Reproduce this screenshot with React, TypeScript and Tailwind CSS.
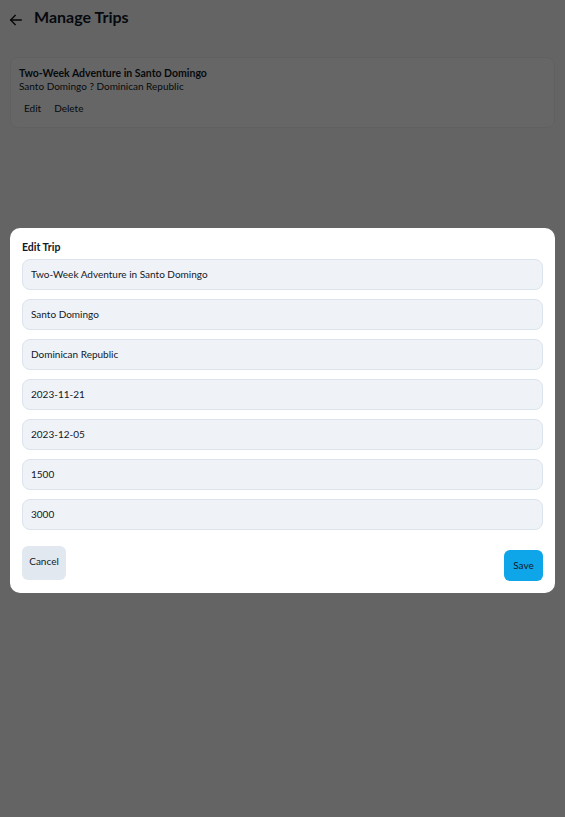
import React from "react";

const font = { fontFamily: 'Lato, "Noto Sans", sans-serif' };

export default function App() {
  const values = [
    "Two-Week Adventure in Santo Domingo",
    "Santo Domingo",
    "Dominican Republic",
    "2023-11-21",
    "2023-12-05",
    "1500",
    "3000",
  ];
  return (
    <div className="relative min-h-[817px] bg-[#fafbfc] text-[#111827]" style={font}>
      <div className="flex items-center gap-[10px] px-[8px] pt-[6px]">
        <svg width="16" height="16" viewBox="0 0 24 24" fill="none" stroke="#111" strokeWidth="2" strokeLinecap="round" strokeLinejoin="round" className="mt-[6px]">
          <path d="M20 12H4" />
          <path d="M11 19l-7-7 7-7" />
        </svg>
        <h1 className="text-[16px] font-bold leading-[22px]">Manage Trips</h1>
      </div>
      <div className="mx-[10px] mt-[29px] h-[71px] rounded-[8px] border border-[#f0f0f0] bg-white px-[8px] pt-[9px]">
        <div className="text-[10.5px] font-bold leading-[13px]">Two-Week Adventure in Santo Domingo</div>
        <div className="text-[10px] leading-[13px]">Santo Domingo ? Dominican Republic</div>
        <div className="mt-[9px] flex gap-[2px] text-[10px] leading-[13px]">
          <button className="px-[5px]">Edit</button>
          <button className="px-[6px]">Delete</button>
        </div>
      </div>

      <div className="fixed inset-0 flex items-center justify-center bg-black/60 px-[10px]">
        <div className="mt-[4px] w-full rounded-[10px] bg-white px-[12px] pt-[12px] pb-[12px]">
          <div className="text-[10.5px] font-bold leading-[14px]">Edit Trip</div>
          <div className="mt-[5px] flex flex-col gap-[9px]">
            {values.map((v) => (
              <div
                key={v}
                className="flex h-[31px] items-center rounded-[8px] border border-[#dbe3ec] bg-[#eff2f7] px-[8px] text-[10px]"
              >
                {v}
              </div>
            ))}
          </div>
          <div className="mt-[16px] flex items-end justify-between">
            <button className="mb-[1px] h-[34px] w-[44px] rounded-[6px] bg-[#e2e8f0] pb-[3px] text-[10px]">Cancel</button>
            <button className="h-[31px] w-[39px] rounded-[6px] bg-[#0ea5e9] text-[10px]">Save</button>
          </div>
        </div>
      </div>
    </div>
  );
}
